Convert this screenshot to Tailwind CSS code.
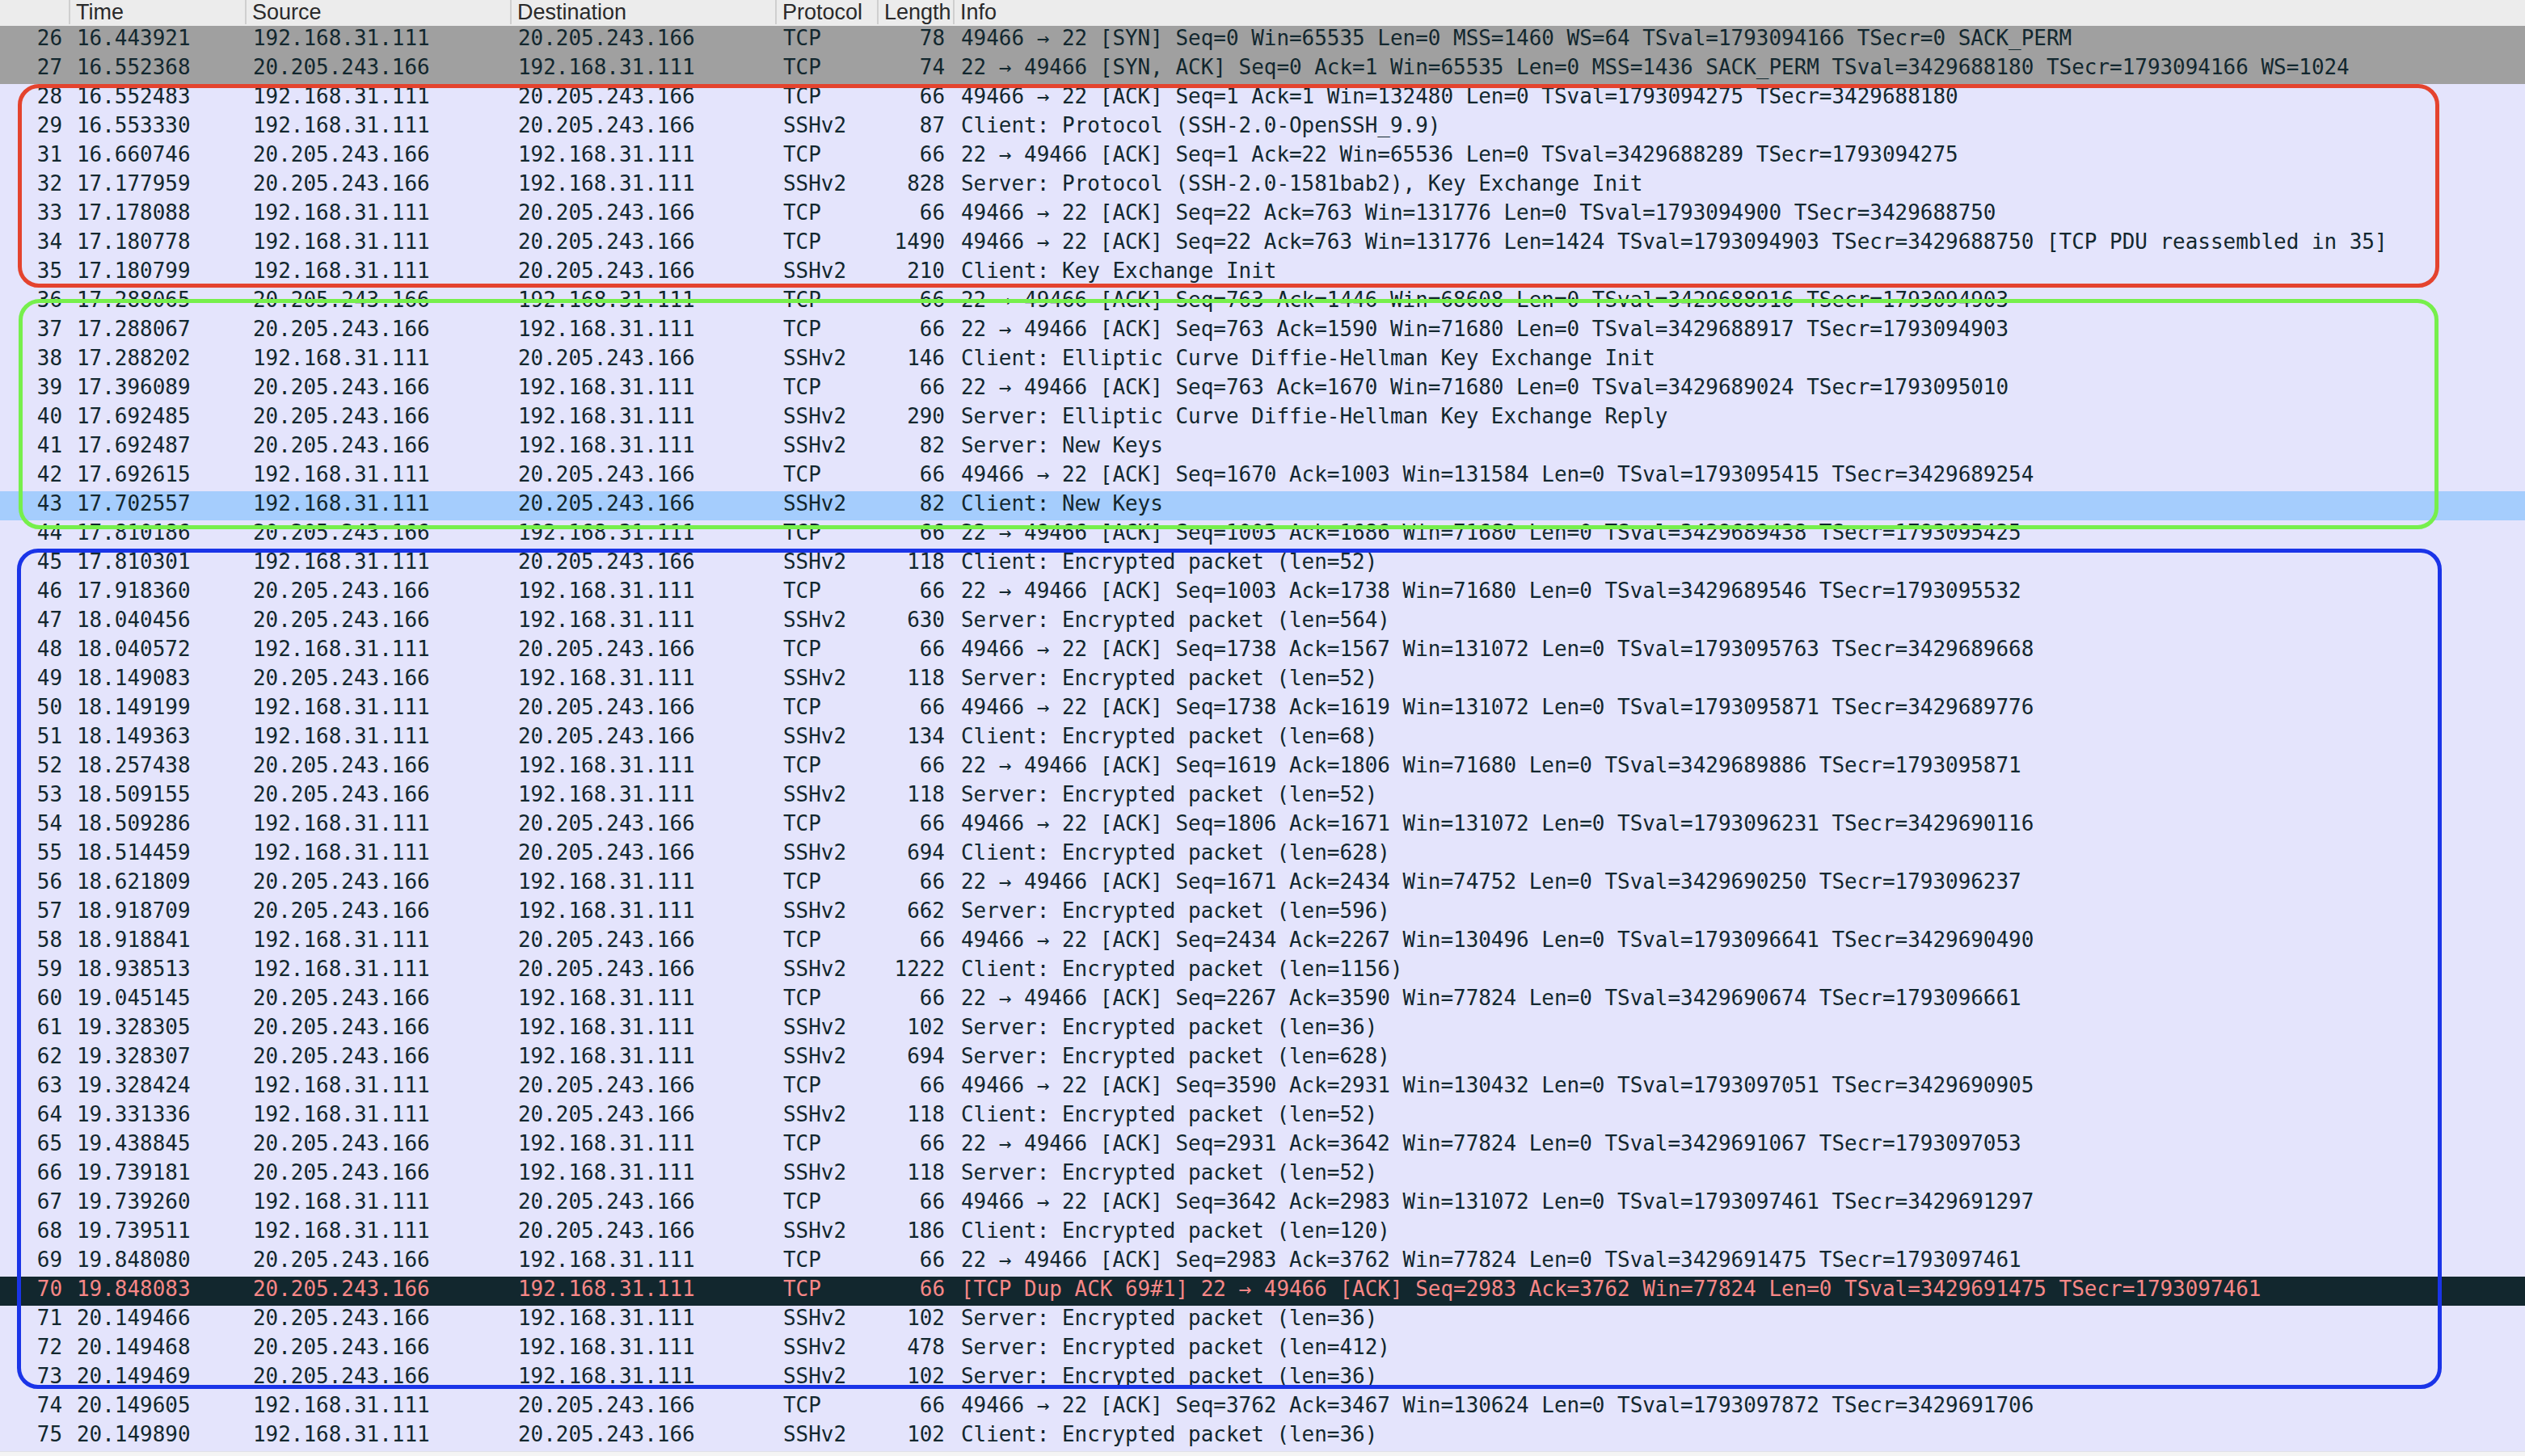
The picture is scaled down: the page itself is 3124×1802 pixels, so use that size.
<!DOCTYPE html>
<html lang="en">
<head>
<meta charset="utf-8">
<title>Packet list</title>
<script src="https://cdn.jsdelivr.net/npm/@tailwindcss/browser@4"></script>
</head>
<body class="m-0 bg-[#f4f4f4]">
<main class="relative w-[3124px] h-[1802px] overflow-hidden">
  <header class="grid grid-cols-[85px_218px_328px_328px_126px_94px_1fr] h-8 bg-[#ececec] text-[#2a2a2a] text-[27px] leading-[30px] font-['Liberation_Sans',sans-serif] [&>div]:h-[30px] [&>div]:pl-[7px] [&>div:not(:first-child)]:border-l-2 [&>div:not(:first-child)]:border-[#cfcfcf] [&>div]:whitespace-nowrap">
    <div></div><div>Time</div><div>Source</div><div>Destination</div><div>Protocol</div><div>Length</div><div>Info</div>
  </header>
  <section class="bg-[#e4e4fc] text-[#12272e] text-[25.95px] leading-[30px] font-['DejaVu_Sans_Mono',monospace] whitespace-nowrap [&>div]:grid [&>div]:grid-cols-[85px_218px_328px_328px_126px_94px_1fr] [&>div]:h-9 [&>div>span]:pl-[10px] [&>div>span:nth-child(1)]:text-right [&>div>span:nth-child(1)]:pr-[8px] [&>div>span:nth-child(6)]:text-right [&>div>span:nth-child(6)]:pr-[10px] [&>div>span:nth-child(6)]:pl-0">
    <div class="bg-[#a0a0a0]"><span>26</span><span>16.443921</span><span>192.168.31.111</span><span>20.205.243.166</span><span>TCP</span><span>78</span><span>49466 → 22 [SYN] Seq=0 Win=65535 Len=0 MSS=1460 WS=64 TSval=1793094166 TSecr=0 SACK_PERM</span></div>
    <div class="bg-[#a0a0a0]"><span>27</span><span>16.552368</span><span>20.205.243.166</span><span>192.168.31.111</span><span>TCP</span><span>74</span><span>22 → 49466 [SYN, ACK] Seq=0 Ack=1 Win=65535 Len=0 MSS=1436 SACK_PERM TSval=3429688180 TSecr=1793094166 WS=1024</span></div>
    <div><span>28</span><span>16.552483</span><span>192.168.31.111</span><span>20.205.243.166</span><span>TCP</span><span>66</span><span>49466 → 22 [ACK] Seq=1 Ack=1 Win=132480 Len=0 TSval=1793094275 TSecr=3429688180</span></div>
    <div><span>29</span><span>16.553330</span><span>192.168.31.111</span><span>20.205.243.166</span><span>SSHv2</span><span>87</span><span>Client: Protocol (SSH-2.0-OpenSSH_9.9)</span></div>
    <div><span>31</span><span>16.660746</span><span>20.205.243.166</span><span>192.168.31.111</span><span>TCP</span><span>66</span><span>22 → 49466 [ACK] Seq=1 Ack=22 Win=65536 Len=0 TSval=3429688289 TSecr=1793094275</span></div>
    <div><span>32</span><span>17.177959</span><span>20.205.243.166</span><span>192.168.31.111</span><span>SSHv2</span><span>828</span><span>Server: Protocol (SSH-2.0-1581bab2), Key Exchange Init</span></div>
    <div><span>33</span><span>17.178088</span><span>192.168.31.111</span><span>20.205.243.166</span><span>TCP</span><span>66</span><span>49466 → 22 [ACK] Seq=22 Ack=763 Win=131776 Len=0 TSval=1793094900 TSecr=3429688750</span></div>
    <div><span>34</span><span>17.180778</span><span>192.168.31.111</span><span>20.205.243.166</span><span>TCP</span><span>1490</span><span>49466 → 22 [ACK] Seq=22 Ack=763 Win=131776 Len=1424 TSval=1793094903 TSecr=3429688750 [TCP PDU reassembled in 35]</span></div>
    <div><span>35</span><span>17.180799</span><span>192.168.31.111</span><span>20.205.243.166</span><span>SSHv2</span><span>210</span><span>Client: Key Exchange Init</span></div>
    <div><span>36</span><span>17.288065</span><span>20.205.243.166</span><span>192.168.31.111</span><span>TCP</span><span>66</span><span>22 → 49466 [ACK] Seq=763 Ack=1446 Win=68608 Len=0 TSval=3429688916 TSecr=1793094903</span></div>
    <div><span>37</span><span>17.288067</span><span>20.205.243.166</span><span>192.168.31.111</span><span>TCP</span><span>66</span><span>22 → 49466 [ACK] Seq=763 Ack=1590 Win=71680 Len=0 TSval=3429688917 TSecr=1793094903</span></div>
    <div><span>38</span><span>17.288202</span><span>192.168.31.111</span><span>20.205.243.166</span><span>SSHv2</span><span>146</span><span>Client: Elliptic Curve Diffie-Hellman Key Exchange Init</span></div>
    <div><span>39</span><span>17.396089</span><span>20.205.243.166</span><span>192.168.31.111</span><span>TCP</span><span>66</span><span>22 → 49466 [ACK] Seq=763 Ack=1670 Win=71680 Len=0 TSval=3429689024 TSecr=1793095010</span></div>
    <div><span>40</span><span>17.692485</span><span>20.205.243.166</span><span>192.168.31.111</span><span>SSHv2</span><span>290</span><span>Server: Elliptic Curve Diffie-Hellman Key Exchange Reply</span></div>
    <div><span>41</span><span>17.692487</span><span>20.205.243.166</span><span>192.168.31.111</span><span>SSHv2</span><span>82</span><span>Server: New Keys</span></div>
    <div><span>42</span><span>17.692615</span><span>192.168.31.111</span><span>20.205.243.166</span><span>TCP</span><span>66</span><span>49466 → 22 [ACK] Seq=1670 Ack=1003 Win=131584 Len=0 TSval=1793095415 TSecr=3429689254</span></div>
    <div class="bg-[#a5cdfd]"><span>43</span><span>17.702557</span><span>192.168.31.111</span><span>20.205.243.166</span><span>SSHv2</span><span>82</span><span>Client: New Keys</span></div>
    <div><span>44</span><span>17.810186</span><span>20.205.243.166</span><span>192.168.31.111</span><span>TCP</span><span>66</span><span>22 → 49466 [ACK] Seq=1003 Ack=1686 Win=71680 Len=0 TSval=3429689438 TSecr=1793095425</span></div>
    <div><span>45</span><span>17.810301</span><span>192.168.31.111</span><span>20.205.243.166</span><span>SSHv2</span><span>118</span><span>Client: Encrypted packet (len=52)</span></div>
    <div><span>46</span><span>17.918360</span><span>20.205.243.166</span><span>192.168.31.111</span><span>TCP</span><span>66</span><span>22 → 49466 [ACK] Seq=1003 Ack=1738 Win=71680 Len=0 TSval=3429689546 TSecr=1793095532</span></div>
    <div><span>47</span><span>18.040456</span><span>20.205.243.166</span><span>192.168.31.111</span><span>SSHv2</span><span>630</span><span>Server: Encrypted packet (len=564)</span></div>
    <div><span>48</span><span>18.040572</span><span>192.168.31.111</span><span>20.205.243.166</span><span>TCP</span><span>66</span><span>49466 → 22 [ACK] Seq=1738 Ack=1567 Win=131072 Len=0 TSval=1793095763 TSecr=3429689668</span></div>
    <div><span>49</span><span>18.149083</span><span>20.205.243.166</span><span>192.168.31.111</span><span>SSHv2</span><span>118</span><span>Server: Encrypted packet (len=52)</span></div>
    <div><span>50</span><span>18.149199</span><span>192.168.31.111</span><span>20.205.243.166</span><span>TCP</span><span>66</span><span>49466 → 22 [ACK] Seq=1738 Ack=1619 Win=131072 Len=0 TSval=1793095871 TSecr=3429689776</span></div>
    <div><span>51</span><span>18.149363</span><span>192.168.31.111</span><span>20.205.243.166</span><span>SSHv2</span><span>134</span><span>Client: Encrypted packet (len=68)</span></div>
    <div><span>52</span><span>18.257438</span><span>20.205.243.166</span><span>192.168.31.111</span><span>TCP</span><span>66</span><span>22 → 49466 [ACK] Seq=1619 Ack=1806 Win=71680 Len=0 TSval=3429689886 TSecr=1793095871</span></div>
    <div><span>53</span><span>18.509155</span><span>20.205.243.166</span><span>192.168.31.111</span><span>SSHv2</span><span>118</span><span>Server: Encrypted packet (len=52)</span></div>
    <div><span>54</span><span>18.509286</span><span>192.168.31.111</span><span>20.205.243.166</span><span>TCP</span><span>66</span><span>49466 → 22 [ACK] Seq=1806 Ack=1671 Win=131072 Len=0 TSval=1793096231 TSecr=3429690116</span></div>
    <div><span>55</span><span>18.514459</span><span>192.168.31.111</span><span>20.205.243.166</span><span>SSHv2</span><span>694</span><span>Client: Encrypted packet (len=628)</span></div>
    <div><span>56</span><span>18.621809</span><span>20.205.243.166</span><span>192.168.31.111</span><span>TCP</span><span>66</span><span>22 → 49466 [ACK] Seq=1671 Ack=2434 Win=74752 Len=0 TSval=3429690250 TSecr=1793096237</span></div>
    <div><span>57</span><span>18.918709</span><span>20.205.243.166</span><span>192.168.31.111</span><span>SSHv2</span><span>662</span><span>Server: Encrypted packet (len=596)</span></div>
    <div><span>58</span><span>18.918841</span><span>192.168.31.111</span><span>20.205.243.166</span><span>TCP</span><span>66</span><span>49466 → 22 [ACK] Seq=2434 Ack=2267 Win=130496 Len=0 TSval=1793096641 TSecr=3429690490</span></div>
    <div><span>59</span><span>18.938513</span><span>192.168.31.111</span><span>20.205.243.166</span><span>SSHv2</span><span>1222</span><span>Client: Encrypted packet (len=1156)</span></div>
    <div><span>60</span><span>19.045145</span><span>20.205.243.166</span><span>192.168.31.111</span><span>TCP</span><span>66</span><span>22 → 49466 [ACK] Seq=2267 Ack=3590 Win=77824 Len=0 TSval=3429690674 TSecr=1793096661</span></div>
    <div><span>61</span><span>19.328305</span><span>20.205.243.166</span><span>192.168.31.111</span><span>SSHv2</span><span>102</span><span>Server: Encrypted packet (len=36)</span></div>
    <div><span>62</span><span>19.328307</span><span>20.205.243.166</span><span>192.168.31.111</span><span>SSHv2</span><span>694</span><span>Server: Encrypted packet (len=628)</span></div>
    <div><span>63</span><span>19.328424</span><span>192.168.31.111</span><span>20.205.243.166</span><span>TCP</span><span>66</span><span>49466 → 22 [ACK] Seq=3590 Ack=2931 Win=130432 Len=0 TSval=1793097051 TSecr=3429690905</span></div>
    <div><span>64</span><span>19.331336</span><span>192.168.31.111</span><span>20.205.243.166</span><span>SSHv2</span><span>118</span><span>Client: Encrypted packet (len=52)</span></div>
    <div><span>65</span><span>19.438845</span><span>20.205.243.166</span><span>192.168.31.111</span><span>TCP</span><span>66</span><span>22 → 49466 [ACK] Seq=2931 Ack=3642 Win=77824 Len=0 TSval=3429691067 TSecr=1793097053</span></div>
    <div><span>66</span><span>19.739181</span><span>20.205.243.166</span><span>192.168.31.111</span><span>SSHv2</span><span>118</span><span>Server: Encrypted packet (len=52)</span></div>
    <div><span>67</span><span>19.739260</span><span>192.168.31.111</span><span>20.205.243.166</span><span>TCP</span><span>66</span><span>49466 → 22 [ACK] Seq=3642 Ack=2983 Win=131072 Len=0 TSval=1793097461 TSecr=3429691297</span></div>
    <div><span>68</span><span>19.739511</span><span>192.168.31.111</span><span>20.205.243.166</span><span>SSHv2</span><span>186</span><span>Client: Encrypted packet (len=120)</span></div>
    <div><span>69</span><span>19.848080</span><span>20.205.243.166</span><span>192.168.31.111</span><span>TCP</span><span>66</span><span>22 → 49466 [ACK] Seq=2983 Ack=3762 Win=77824 Len=0 TSval=3429691475 TSecr=1793097461</span></div>
    <div class="bg-[#12272e] text-[#f78787]"><span>70</span><span>19.848083</span><span>20.205.243.166</span><span>192.168.31.111</span><span>TCP</span><span>66</span><span>[TCP Dup ACK 69#1] 22 → 49466 [ACK] Seq=2983 Ack=3762 Win=77824 Len=0 TSval=3429691475 TSecr=1793097461</span></div>
    <div><span>71</span><span>20.149466</span><span>20.205.243.166</span><span>192.168.31.111</span><span>SSHv2</span><span>102</span><span>Server: Encrypted packet (len=36)</span></div>
    <div><span>72</span><span>20.149468</span><span>20.205.243.166</span><span>192.168.31.111</span><span>SSHv2</span><span>478</span><span>Server: Encrypted packet (len=412)</span></div>
    <div><span>73</span><span>20.149469</span><span>20.205.243.166</span><span>192.168.31.111</span><span>SSHv2</span><span>102</span><span>Server: Encrypted packet (len=36)</span></div>
    <div><span>74</span><span>20.149605</span><span>192.168.31.111</span><span>20.205.243.166</span><span>TCP</span><span>66</span><span>49466 → 22 [ACK] Seq=3762 Ack=3467 Win=130624 Len=0 TSval=1793097872 TSecr=3429691706</span></div>
    <div><span>75</span><span>20.149890</span><span>192.168.31.111</span><span>20.205.243.166</span><span>SSHv2</span><span>102</span><span>Client: Encrypted packet (len=36)</span></div>
  </section>
  <div class="h-px bg-[#e0e0e8]"></div>
  <div class="absolute left-[22px] top-[104px] w-[2996px] h-[252px] border-[5px] border-[#e4432e] rounded-[26px]"></div>
  <div class="absolute left-[23px] top-[370px] w-[2994px] h-[285px] border-[5px] border-[#76ef4c] rounded-[26px]"></div>
  <div class="absolute left-[21px] top-[679px] w-[3000px] h-[1040px] border-[5px] border-[#1a34e8] rounded-[26px]"></div>
</main>
</body>
</html>
